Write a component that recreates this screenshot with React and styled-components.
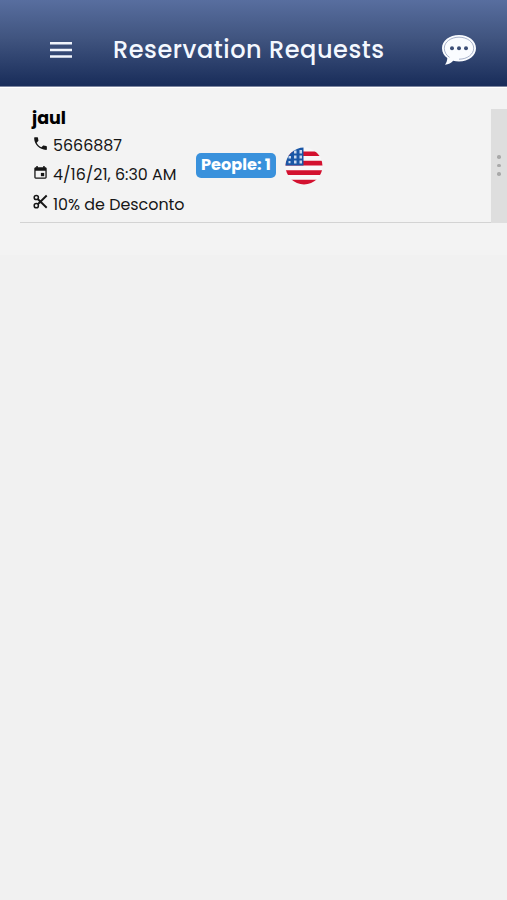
import React from "react";
import styled, { createGlobalStyle } from "styled-components";
import { MdPhone } from "react-icons/md";

const reservations = [
  {
    id: 1,
    name: "jaul",
    phone: "5666887",
    date: "4/16/21, 6:30 AM",
    discount: "10% de Desconto",
    people: 1,
  },
];

const MenuIcon = () => (
  <svg width="22" height="16" viewBox="0 0 22 16">
    <path
      d="M0 0h22v2.500H0zM0 6.700h22v2.500H0zM0 13.300h22v2.500H0z"
      fill="#f0f4fc"
    />
  </svg>
);

const ChatIcon = () => (
  <svg width="36" height="32" viewBox="0 0 36 32">
    <path
      d="M18 1C8.500 1 1 6.700 1 14.200c0 4.300 2.200 7.500 5.300 9.900-.1 2.800-.9 4.800-2.300 6.600 3.500-.3 6.300-1.900 8.200-4 1.800.5 3.700.7 5.800.7 9.500 0 17-5.700 17-13.200S27.500 1 18 1z"
      fill="#fafcff"
    />
    <path
      d="M8.500 23.300C5.300 21.400 3.300 18 3.300 14.200 3.300 8 9.800 3.200 18 3.200S32.700 8 32.700 14.200 26.200 25.200 18 25.200"
      fill="none"
      stroke="#8492b3"
      strokeWidth="0.7"
    />
    <circle cx="11" cy="14.2" r="2" fill="#3d4f77" />
    <circle cx="18" cy="14.2" r="2" fill="#3d4f77" />
    <circle cx="25" cy="14.2" r="2" fill="#3d4f77" />
  </svg>
);

const CalendarIcon = () => (
  <svg viewBox="0 0 17 17" fill="currentColor">
    <path
      fillRule="evenodd"
      d="M4.300 2h1.500v1.200h5.400V2h1.500v1.200h.6c.8 0 1.400.6 1.400 1.400v8.700c0 .8-.6 1.400-1.400 1.400H3.700c-.8 0-1.400-.6-1.400-1.400V4.600c0-.8.6-1.400 1.400-1.400h.6zM3.600 6.700v6.700h9.800V6.700z"
    />
    <path d="M8.900 8.900h3.300v3.300H8.900z" />
  </svg>
);

const ScissorsIcon = () => (
  <svg viewBox="0 0 17 17" fill="none" stroke="currentColor" strokeWidth="1.5">
    <circle cx="4.3" cy="4.5" r="2.1" />
    <circle cx="4.3" cy="12.7" r="2.1" />
    <path d="M5.800 6l8.900 8.700M5.800 11.200l8.900-8.700" strokeWidth="1.9" />
  </svg>
);

const UsFlag = () => (
  <svg width="38" height="38" viewBox="0 0 38 38">
    <clipPath id="flag">
      <circle cx="19" cy="19" r="18.5" />
    </clipPath>
    <g clipPath="url(#flag)">
      <rect width="38" height="38" fill="#f8f7f8" />
      <path
        d="M0 4.500h38v4.600H0zM0 13.700h38v4.800H0zM0 23.300h38v4.700H0zM0 32.800h38V38H0z"
        fill="#d3112f"
      />
      <path d="M0 0h18.500v18.500H0z" fill="#1a57a6" />
      <path
        d="M9 3.500h2.500v3H9zM14.500 3h2.500v3.500h-2.500zM3.500 9h2.500v2.500H3.500zM9 8.500h2.500v3H9zM14.500 8.500h2.500v3h-2.500zM3.500 14h2v2.200h-2zM9 13.500h2.500v3H9zM14.500 13.500h2.500v3h-2.500z"
        fill="#c9d9ee"
      />
    </g>
  </svg>
);

const Reservation = ({ name, phone, date, discount, people }) => (
  <Item>
    <Info>
      <Name>{name}</Name>
      <Line>
        <MdPhone />
        <Text>{phone}</Text>
      </Line>
      <Line>
        <CalendarIcon />
        <Text>{date}</Text>
      </Line>
      <Line>
        <ScissorsIcon />
        <Text>{discount}</Text>
      </Line>
    </Info>
    <Badge>People: {people}</Badge>
    <Flag>
      <UsFlag />
    </Flag>
    <Handle>
      <Dot />
      <Dot />
      <Dot />
    </Handle>
  </Item>
);

const App = () => {
  return (
    <Page>
      <GlobalStyle />
      <Header>
        <IconButton aria-label="menu">
          <MenuIcon />
        </IconButton>
        <Title>Reservation Requests</Title>
        <IconButton aria-label="messages">
          <ChatIcon />
        </IconButton>
      </Header>
      <List>
        {reservations.map((item) => (
          <Reservation key={item.id} {...item} />
        ))}
      </List>
    </Page>
  );
};

const GlobalStyle = createGlobalStyle`
  * {
    box-sizing: border-box;
  }

  body {
    margin: 0;
    background: #f1f1f1;
    font-family: Poppins, Inter, sans-serif;
  }
`;

const Page = styled.div`
  min-height: 100vh;
  background: #f1f1f1;
  overflow: hidden;
`;

const Header = styled.header`
  display: flex;
  align-items: center;
  height: 87px;
  padding: 14px 30px 0 50px;
  background: linear-gradient(#586e9f 0%, #40547f 45%, #1a2e5b 98%);
  border-bottom: 1px solid #7d86a0;
`;

const IconButton = styled.button`
  display: flex;
  padding: 0;
  border: none;
  background: none;
  cursor: pointer;
`;

const Title = styled.h1`
  flex: 1;
  margin: 0 0 0 41px;
  color: #f4f8ff;
  font-size: 24px;
  font-weight: 500;
  letter-spacing: 0.56px;
  line-height: 36px;
  white-space: nowrap;
`;

const List = styled.main`
  padding: 21px 0 32px 20px;
  background: #f3f3f3;
  border-top: 1px solid #fff;
`;

const Item = styled.section`
  display: flex;
  align-items: center;
  height: 114px;
  padding-left: 12px;
  border-bottom: 1px solid #d3d3d3;
`;

const Info = styled.div`
  width: 164px;
  height: 114px;
`;

const Name = styled.h2`
  height: 22px;
  margin: 0;
  color: #000;
  font-size: 17.5px;
  font-weight: 700;
  line-height: 19px;
`;

const Line = styled.div`
  display: flex;
  align-items: center;
  height: 29.3px;
  color: #161616;

  svg {
    flex: none;
    width: 17px;
    height: 17px;
    margin: -4px 4px 0 0;
  }
`;

const Text = styled.span`
  font-size: 15.9px;
  line-height: 24px;
  padding-top: 2px;
  white-space: nowrap;
`;

const Badge = styled.span`
  width: 80px;
  height: 25px;
  border-radius: 5px;
  background: #3991dc;
  color: #fff;
  font-size: 16.1px;
  font-weight: 700;
  line-height: 24px;
  text-align: center;
  white-space: nowrap;
`;

const Flag = styled.div`
  display: flex;
  margin-left: 9px;
`;

const Handle = styled.div`
  display: flex;
  flex-direction: column;
  align-items: center;
  justify-content: center;
  gap: 5px;
  width: 16px;
  height: 114px;
  margin-left: auto;
  background: #dedede;
`;

const Dot = styled.span`
  width: 3.5px;
  height: 3.5px;
  border-radius: 50%;
  background: #a9a9a9;
`;

export default App;
